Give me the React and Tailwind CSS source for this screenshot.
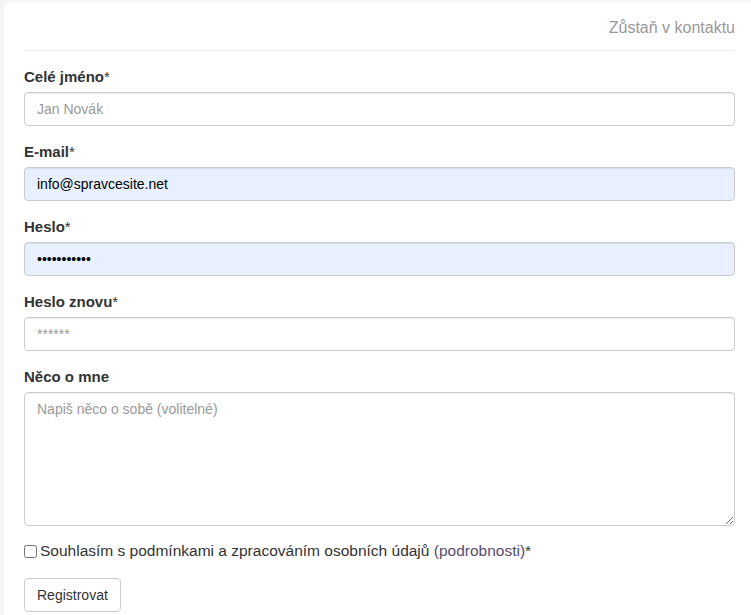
import React from 'react';

const fields = [
    { label: 'Celé jméno', required: true, type: 'text', placeholder: 'Jan Novák' },
    { label: 'E-mail', required: true, type: 'email', value: 'info@spravcesite.net', filled: true },
    { label: 'Heslo', required: true, type: 'password', value: '12345678901', filled: true },
    { label: 'Heslo znovu', required: true, type: 'password', placeholder: '******' },
];

const Label = ({ children, required }) => (
    <label className="block text-[15px] leading-[21px] font-bold text-[#333] mb-[5px]">
        {children}
        {required && <span className="font-normal">*</span>}
    </label>
);

const App = () => {
    return (
        <div className="min-h-screen bg-[#f5f5f5] pl-[4px] pt-[3px] font-['Liberation_Sans',Arial,sans-serif]">
            <div className="bg-white rounded-tl-[4px] pl-5 pr-4 min-h-[612px]">
                {/* Header */}
                <div className="pt-[14px] pb-[11px] border-b border-[#eeeeee] text-right">
                    <h2 className="text-[16px] leading-[22px] text-[#999] font-normal">Zůstaň v kontaktu</h2>
                </div>

                <form className="pt-[15px]" onSubmit={(e) => e.preventDefault()}>
                    {fields.map((f) => (
                        <div key={f.label} className="mb-[15px]">
                            <Label required={f.required}>{f.label}</Label>
                            <input
                                type={f.type}
                                placeholder={f.placeholder}
                                defaultValue={f.value}
                                className={`block w-full h-[34px] px-3 text-[14px] text-black border border-[#ccc] rounded-[4px] shadow-[inset_0_1px_1px_rgba(0,0,0,0.075)] outline-none placeholder:text-[#999] ${f.filled ? 'bg-[#e8f0fe]' : 'bg-white'}`}
                            />
                        </div>
                    ))}

                    <div className="mb-[15px]">
                        <Label>Něco o mne</Label>
                        <textarea
                            placeholder="Napiš něco o sobě (volitelné)"
                            className="block w-full h-[134px] px-3 py-[6px] text-[14px] leading-[20px] text-[#555] border border-[#ccc] rounded-[4px] shadow-[inset_0_1px_1px_rgba(0,0,0,0.075)] outline-none placeholder:text-[#999]"
                        />
                    </div>

                    <div className="flex items-center h-[20px] text-[15.5px] text-[#333]">
                        <input type="checkbox" className="w-[13px] h-[13px] m-0 mr-[3px]" />
                        <span>
                            Souhlasím s podmínkami a zpracováním osobních údajů{' '}
                            <a href="#" className="text-[#594a6e]">(podrobnosti)</a>*
                        </span>
                    </div>

                    <button
                        type="submit"
                        className="mt-[17px] h-[34px] px-3 text-[14px] text-[#333] bg-white border border-[#ccc] rounded-[4px]"
                    >
                        Registrovat
                    </button>
                </form>
            </div>
        </div>
    );
};

export default App;
